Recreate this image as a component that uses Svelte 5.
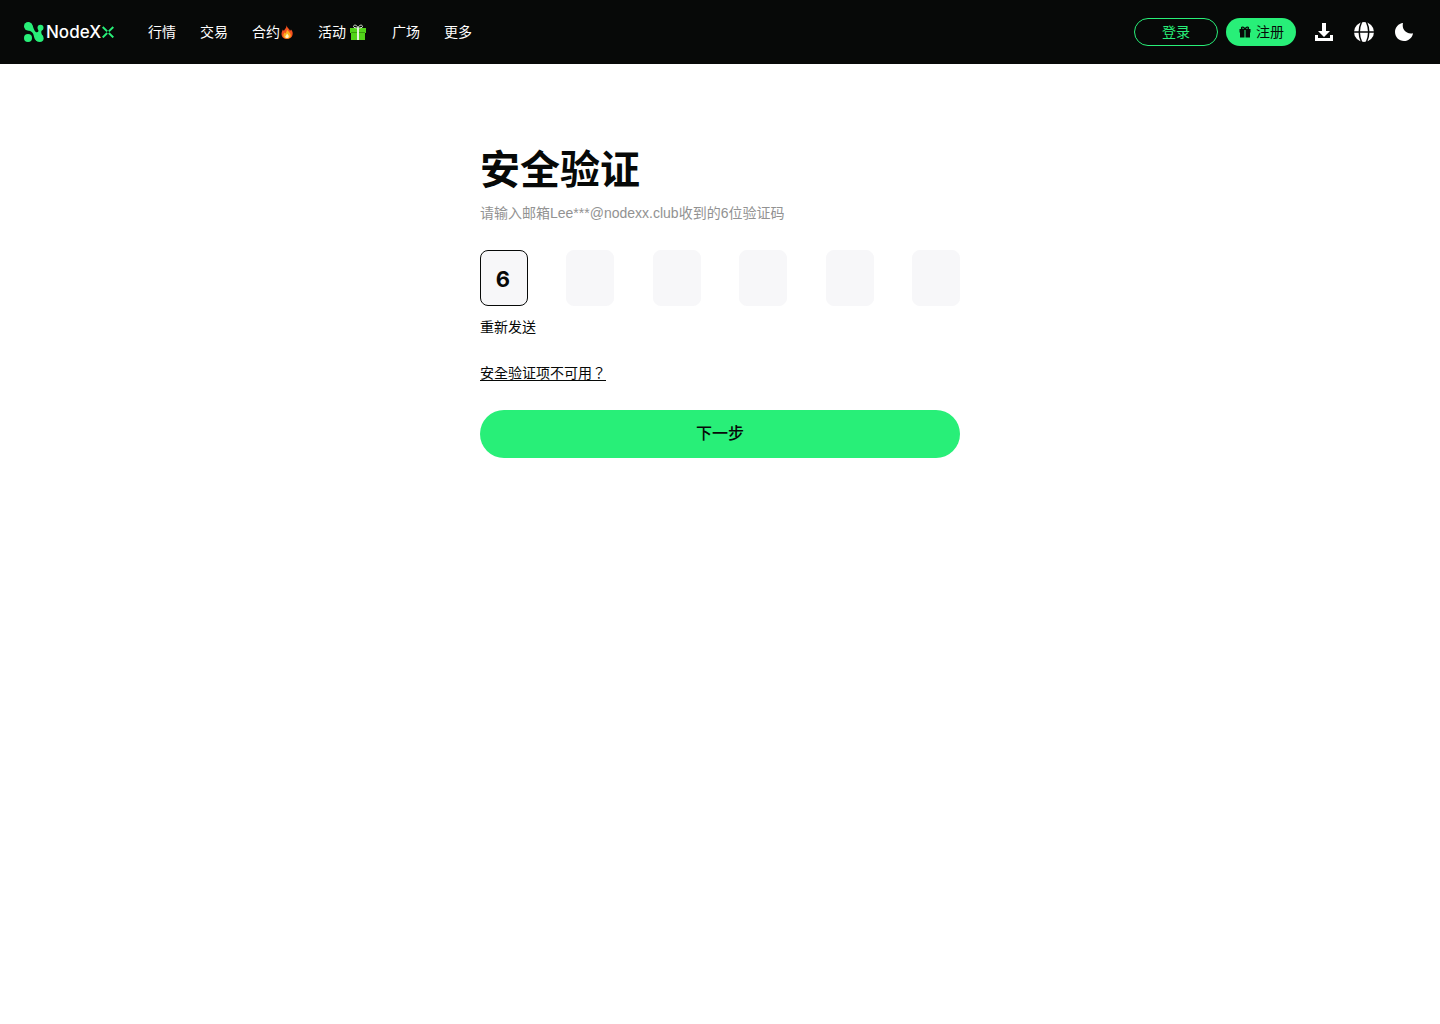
<script>
    const menu = [
        { label: '行情' },
        { label: '交易' },
        { label: '合约', icon: 'fire' },
        { label: '活动', icon: 'gift' },
        { label: '广场' },
        { label: '更多' }
    ];

    let code = $state(['6', '', '', '', '', '']);
    let boxes = $state([]);

    function onInput(i) {
        code[i] = code[i].replace(/\D/g, '');
        if (code[i] && i < 5) boxes[i + 1].focus();
    }

    function onKeydown(e, i) {
        if (e.key === 'Backspace' && !code[i] && i > 0) boxes[i - 1].focus();
    }
</script>

<header>
    <a href="/" class="logo" aria-label="NodeXx">
        <svg width="20" height="20" viewBox="0 0 20 20" fill="#28ef78">
            <path d="M7.5 1.8 C9.5 4 9.4 8.5 12.2 10.2 C14.4 10.6 14.6 9 14.4 7.5 L17.8 8 C16.8 10 17.3 12 18.8 14 L14 19.6 C9.5 18.5 10.5 13.5 8.5 10.8 C7 9 5.5 9 3 8z" />
            <circle cx="4.2" cy="4.2" r="4.2" />
            <circle cx="4" cy="15.9" r="4" />
            <circle cx="16.5" cy="5.8" r="3" />
            <circle cx="15.8" cy="16.2" r="3.8" />
        </svg>
        <span>NodeX</span>
        <svg width="12" height="12" viewBox="0 0 12 12" fill="none" stroke="#28ef78" stroke-width="2">
            <path d="M0.7 1 L5.2 5.4 M11.3 1 L6.8 5.4 M0.7 11.4 L5.2 7 M11.3 11.4 L6.8 7" />
        </svg>
    </a>
    <nav>
        {#each menu as item}
            <a href="/{item.label}" class:spaced={item.icon === 'gift'}>
                {item.label}
                {#if item.icon === 'fire'}
                    <svg width="14" height="14" viewBox="0 0 14 14">
                        <path fill="#f4511e" d="M6.5 0 C7 3 10 4 10 6 L11 4.5 C12.5 6 13 7.5 12.5 10 C12 12.5 9.5 14 7 14 C4 14 1.5 12 1.5 9 C1.5 7 2.5 6 2.8 4.5 L4 6 C4.5 4 6.8 3 6.5 0z" />
                        <path fill="#ffb11f" d="M7 4 C7.5 6.5 10.8 7.5 10.8 10.5 C10.8 12.5 8.8 13.6 7 13.6 C5 13.6 3.4 12.2 3.4 10.5 C3.4 9.2 4.2 8.5 4.5 7.5 L5.6 8.5 C6 7 7.2 6 7 4z" />
                        <path fill="#fff3c4" d="M7 8.5 C8.2 10 9 10.8 8.7 12 C8.2 13.4 5.8 13.4 5.3 12 C5 11 6.8 10 7 8.5z" />
                    </svg>
                {:else if item.icon === 'gift'}
                    <svg width="18" height="18" viewBox="0 0 18 18">
                        <path fill="#52d41a" d="M0 5h16v5H0z M1 9h14v8H1z" />
                        <path fill="#389e0d" d="M1 9h14v1H1z" />
                        <path fill="#e4f5dc" d="M7 5h2v12H7z" />
                        <path fill="none" stroke="#e4f5dc" d="M8 5 C7 1.5 3.5 1.5 3.5 3.5 C3.5 4.8 6 5 8 5 C10 5 12.5 4.8 12.5 3.5 C12.5 1.5 9 1.5 8 5" />
                    </svg>
                {/if}
            </a>
        {/each}
    </nav>
    <div class="actions">
        <a href="/login" class="login">登录</a>
        <a href="/register" class="register">
            <svg width="12" height="12" viewBox="0 0 12 12" fill="#070908">
                <path d="M0.5 3h5v3.4h-5z M6.5 3h5v3.4h-5z M1 6h4.5v5.5H1z M6.5 6H11v5.5H6.5z" />
                <path fill="none" stroke="#070908" stroke-width="1.2" d="M6 3.4 C5 0.6 2.5 0.6 2.5 2.2 C2.5 3.2 4 3.4 6 3.4 C8 3.4 9.5 3.2 9.5 2.2 C9.5 0.6 7 0.6 6 3.4" />
            </svg>
            注册
        </a>
        <button class="tool" aria-label="下载">
            <svg width="24" height="24" viewBox="0 0 24 24" fill="#fff">
                <path d="M10 3h4v8h4l-6 6-6-6h4z" />
                <path d="M3 15h3v3h12v-3h3v6H3z" />
            </svg>
        </button>
        <button class="tool" aria-label="语言">
            <svg width="24" height="24" viewBox="0 0 24 24">
                <circle cx="12" cy="12" r="10" fill="#fff" />
                <path fill="none" stroke="#070908" stroke-width="1.5" d="M2 12h20 M9.5 2 C6.8 8 6.8 16 9.5 22 M14.5 2 C17.2 8 17.2 16 14.5 22" />
            </svg>
        </button>
        <button class="tool" aria-label="深色模式">
            <svg width="24" height="24" viewBox="0 0 24 24" fill="#fff">
                <path d="M11 3 C9.5 9 14 14.5 21 13.2 C20.3 17.8 16.6 21 12 21 C7 21 3 17 3 12 C3 7.4 6.5 3.5 11 3z" />
            </svg>
        </button>
    </div>
</header>

<main>
    <h1>安全验证</h1>
    <p>请输入邮箱Lee***@nodexx.club收到的6位验证码</p>
    <form onsubmit={(e) => e.preventDefault()}>
        <div class="code">
            {#each code as _, i}
                <input
                    type="text"
                    inputmode="numeric"
                    maxlength="1"
                    aria-label="验证码第{i + 1}位"
                    class:active={code[i]}
                    bind:value={code[i]}
                    bind:this={boxes[i]}
                    oninput={() => onInput(i)}
                    onkeydown={(e) => onKeydown(e, i)}
                />
            {/each}
        </div>
        <button type="button" class="resend">重新发送</button>
        <a href="/help" class="help">安全验证项不可用？</a>
        <button type="submit" class="next">下一步</button>
    </form>
</main>

<style>
    :global(body) {
        margin: 0;
        background: #fff;
        color: #070908;
        font-family: "Liberation Sans", "Noto Sans CJK SC", sans-serif;
        font-size: 14px;
        line-height: 20px;
    }

    a {
        color: inherit;
        text-decoration: none;
    }

    button,
    input {
        font: inherit;
        color: inherit;
        border: none;
        padding: 0;
        box-sizing: border-box;
    }

    button {
        background: none;
        cursor: pointer;
    }

    svg {
        display: block;
        flex: none;
    }

    header {
        display: flex;
        align-items: center;
        height: 64px;
        padding: 0 24px;
        background: #070908;
        color: #fff;
    }

    .logo {
        display: flex;
        align-items: center;
        width: 92px;
        margin-right: 32px;
    }

    .logo span {
        margin: 0 1px 0 2px;
        font-family: Inter, sans-serif;
        font-size: 17px;
        font-weight: 500;
    }

    nav {
        display: flex;
        gap: 24px;
    }

    nav a {
        display: flex;
        align-items: center;
        white-space: nowrap;
    }

    .spaced {
        gap: 4px;
    }

    .actions {
        display: flex;
        align-items: center;
        margin-left: auto;
    }

    .login,
    .register {
        display: flex;
        align-items: center;
        justify-content: center;
        box-sizing: border-box;
        height: 28px;
        border-radius: 14px;
    }

    .login {
        width: 84px;
        border: 1px solid #28ef78;
        color: #28ef78;
    }

    .register {
        gap: 5px;
        margin-left: 8px;
        padding: 0 12px 0 13px;
        background: #28ef78;
        color: #070908;
    }

    .tool {
        margin-left: 16px;
    }

    main {
        max-width: 480px;
        margin: 0 auto;
        padding: 82px 24px 0;
    }

    h1 {
        margin: 0;
        font-size: 40px;
        line-height: 48px;
        font-weight: 700;
    }

    p {
        margin: 9px 0 27px;
        color: #929292;
    }

    form {
        display: flex;
        flex-direction: column;
        align-items: flex-start;
    }

    .code {
        display: flex;
        justify-content: space-between;
        width: 100%;
    }

    .code input {
        width: 48px;
        height: 56px;
        padding: 2px 2px 0 0;
        border: 1px solid #f7f7f9;
        border-radius: 8px;
        background: #f7f7f9;
        outline: none;
        text-align: center;
        font-family: Inter, sans-serif;
        font-size: 22px;
        font-weight: 700;
    }

    .code input.active,
    .code input:focus {
        border-color: #070908;
    }

    .resend {
        margin-top: 11px;
    }

    /* centred full-width question mark */
    .help {
        margin: 26px 0 27px;
        font-family: "Liberation Sans", "Noto Sans CJK TC", sans-serif;
        text-decoration: underline;
        text-underline-offset: 2px;
    }

    .next {
        width: 100%;
        height: 48px;
        border-radius: 24px;
        background: #28ef78;
        font-size: 16px;
        font-weight: 500;
    }
</style>
